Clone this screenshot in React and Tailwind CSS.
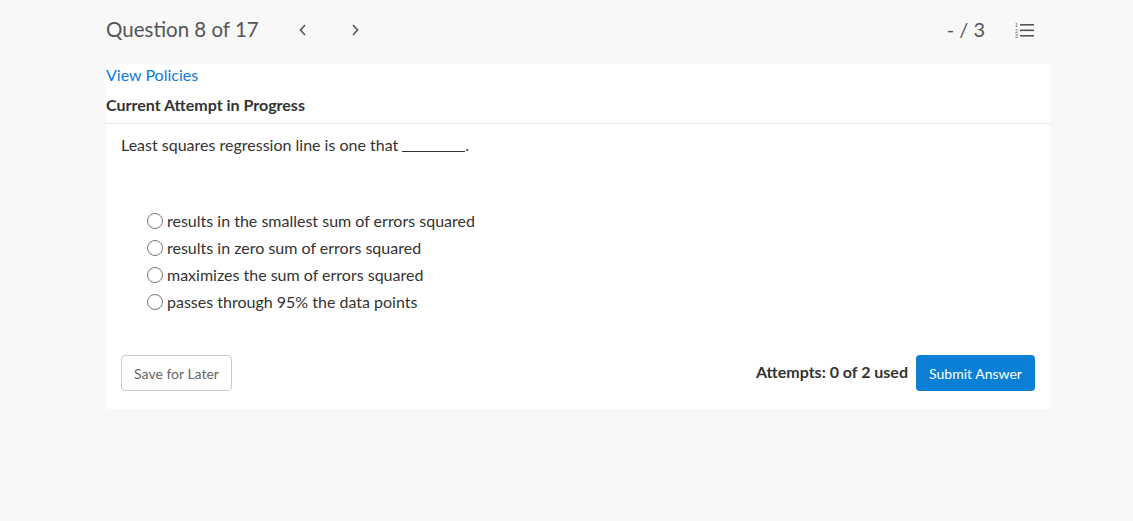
import React from 'react'

const options = [
  'results in the smallest sum of errors squared',
  'results in zero sum of errors squared',
  'maximizes the sum of errors squared',
  'passes through 95% the data points',
]

function ListIcon() {
  return (
    <svg width="20" height="16" viewBox="0 0 20 16" className="text-[#555]">
      <text x="0" y="5" fontSize="5" fill="currentColor" fontFamily="Lato">1</text>
      <text x="0" y="10.5" fontSize="5" fill="currentColor" fontFamily="Lato">2</text>
      <text x="0" y="16" fontSize="5" fill="currentColor" fontFamily="Lato">3</text>
      <rect x="5" y="2" width="14" height="1.6" fill="currentColor" />
      <rect x="5" y="7.5" width="14" height="1.6" fill="currentColor" />
      <rect x="5" y="13" width="14" height="1.6" fill="currentColor" />
    </svg>
  )
}

function Chevron({ dir }) {
  return (
    <svg width="10" height="14" viewBox="0 0 10 14" fill="none" stroke="#555" strokeWidth="1.6">
      {dir === 'left' ? <path d="M7 2 L2.5 7 L7 12" /> : <path d="M3 2 L7.5 7 L3 12" />}
    </svg>
  )
}

export default function App() {
  return (
    <div className="min-h-[521px] bg-[#f8f8f8] font-['Lato','Liberation_Sans',sans-serif]">
      <div className="flex items-center h-[58px] pl-[106px] pr-[98px]">
        <div className="text-[20.5px] text-[#555]">Question 8 of 17</div>
        <div className="ml-[39px] mt-[1px]"><Chevron dir="left" /></div>
        <div className="ml-[42px] mt-[1px]"><Chevron dir="right" /></div>
        <div className="ml-auto text-[20px] text-[#555]">- / 3</div>
        <div className="ml-[30px] mt-[1px]"><ListIcon /></div>
      </div>
      <div className="mx-[106px] mt-[6px] w-[944px] bg-white">
        <div className="h-[22px] flex items-center">
          <a className="text-[16px] text-[#0a7cd6] leading-[22px]">View Policies</a>
        </div>
        <div className="h-[38px] flex items-center border-b border-[#e6e6e6]">
          <span className="text-[16px] font-bold text-[#333]">Current Attempt in Progress</span>
        </div>
        <div className="px-[15px] pt-[10px] pb-[18px]">
          <p className="text-[16px] text-[#333] leading-[22px]">
            Least squares regression line is one that
            <span className="inline-block ml-[4px] w-[63px] h-[1px] bg-[#333] align-[-1px]"></span>.
          </p>
          <div className="mt-[51px] pl-[26px] flex flex-col">
            {options.map((o) => (
              <label key={o} className="flex items-center h-[27px] text-[16px] text-[#333]">
                <span className="w-[16px] h-[16px] rounded-full border border-[#777] bg-white mr-[4px]"></span>
                {o}
              </label>
            ))}
          </div>
          <div className="mt-[40px] flex items-center">
            <button className="h-[36px] w-[111px] border border-[#ccc] rounded-[4px] text-[14px] text-[#666] bg-white">
              Save for Later
            </button>
            <div className="ml-auto text-[16px] font-bold text-[#333] mr-[8px] mt-[-3px]">Attempts: 0 of 2 used</div>
            <button className="h-[36px] w-[119px] rounded-[4px] text-[14px] text-white bg-[#0a7fd6]">
              Submit Answer
            </button>
          </div>
        </div>
      </div>
    </div>
  )
}
